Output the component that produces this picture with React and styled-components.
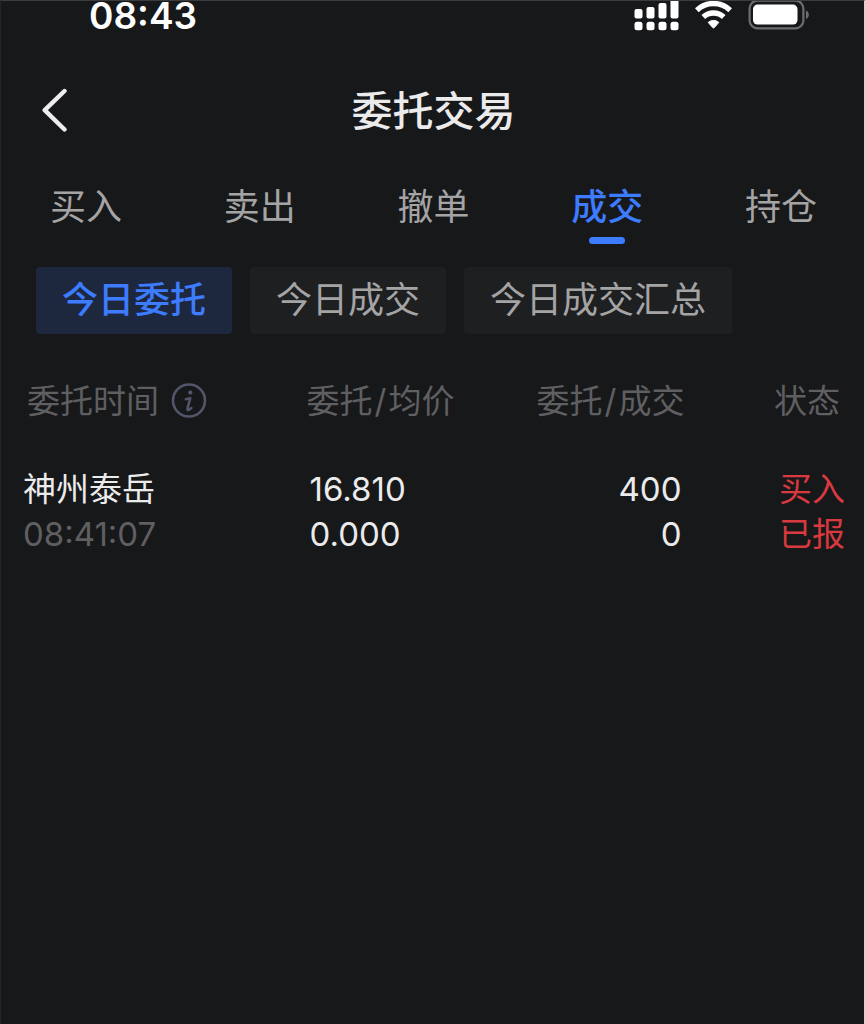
import { useState } from 'react'
import styled, { createGlobalStyle } from 'styled-components'

const GlobalStyle = createGlobalStyle`
    * {
        box-sizing: border-box;
    }

    body {
        margin: 0;
        background: #17181a;
        font-family: Inter, "Noto Sans CJK SC", sans-serif;
    }

    button {
        font-family: inherit;
        border: none;
        background: none;
        padding: 0;
        cursor: pointer;
    }
`

const Page = styled.div`
    min-height: 100vh;
    background: #17181a;
    color: #ebebec;
    border-top: 1px solid #3b3c3e;
    border-left: 1px solid #242527;
    border-right: 1px solid #d4d4d4;
`

// - - STATUS BAR - - //

const StatusBar = styled.div`
    display: flex;
    justify-content: space-between;
    height: 60px;
    padding: 0 54px 0 88px;
`

const Clock = styled.span`
    font-size: 37px;
    line-height: 29px;
    font-weight: 600;
    color: #ffffff;
`

const StatusIcons = styled.div`
    display: flex;
    gap: 16px;
    height: 30px;
`

// - - HEADER - - //

const Header = styled.header`
    display: grid;
    grid-template-columns: 1fr auto 1fr;
    align-items: center;
    height: 100px;
    padding: 0 33px 0 35px;
`

const BackButton = styled.button`
    display: flex;
    justify-self: start;
`

const Title = styled.h1`
    margin: 0;
    font-size: 41px;
    line-height: 60px;
    font-weight: 500;
`

// - - TABS - - //

const Tabs = styled.nav`
    display: flex;
    justify-content: space-between;
    height: 106px;
    padding: 16px 47px 0 49px;
`

const Tab = styled.button`
    display: flex;
    flex-direction: column;
    align-items: center;
    font-size: 36px;
    line-height: 60px;
    font-weight: ${props => props.$active ? 500 : 400};
    color: ${props => props.$active ? '#3d7bff' : '#a5a4a5'};

    &::after {
        content: '';
        width: 36px;
        height: 7px;
        border-radius: 4px;
        background: ${props => props.$active ? '#3d7bff' : 'transparent'};
    }
`

// - - FILTERS - - //

const Filters = styled.div`
    display: flex;
    gap: 18px;
    padding: 0 35px;
`

const Filter = styled.button`
    height: 67px;
    padding: 0 26px;
    border-radius: 4px;
    font-size: 36px;
    line-height: 67px;
    white-space: nowrap;
    font-weight: ${props => props.$active ? 500 : 400};
    color: ${props => props.$active ? '#3d7bff' : '#a5a4a5'};
    background: ${props => props.$active ? '#1d283f' : '#1e1f21'};
`

// - - ORDERS - - //

const Orders = styled.table`
    width: 100%;
    margin-top: 39px;
    border-collapse: collapse;
    table-layout: fixed;
    font-size: 33px;
`

const HeadCell = styled.th`
    width: ${props => props.$width};
    padding: 0 ${props => props.$last ? '24px' : '0'} 38px ${props => props.$first ? '26px' : '0'};
    text-align: ${props => props.$right ? 'right' : 'left'};
    font-weight: 400;
    line-height: 56px;
    white-space: nowrap;
    color: #5f5f61;
`

const HeadLabel = styled.span`
    display: flex;
    align-items: center;
    gap: 11px;
`

const Slash = styled.span`
    padding: 0 2px;
`

const InfoButton = styled.button`
    display: flex;
`

const Cell = styled.td`
    padding: 0 ${props => props.$last ? '19px' : '3px'} 0 ${props => props.$first ? '22px' : '3px'};
    text-align: ${props => props.$right ? 'right' : 'left'};
    white-space: nowrap;
    color: ${props => props.$red ? '#d9393f' : '#ebebec'};
`

const Line = styled.div`
    line-height: 45px;
    color: ${props => props.$dim ? '#5f5f61' : 'inherit'};
`

const SignalIcon = () => (
    <svg width="45" height="30" viewBox="0 0 45 30" fill="#fff" aria-hidden="true">
        <rect x="0.5" y="8" width="8" height="9.5" rx="2" />
        <rect x="12.5" y="6" width="8" height="11.5" rx="2" />
        <rect x="24.5" y="2" width="8" height="15.5" rx="2" />
        <rect x="36.5" y="-2" width="8" height="19.5" rx="2" />
        <rect x="0.5" y="20.8" width="8" height="8.5" rx="2.5" />
        <rect x="12.5" y="20.8" width="8" height="8.5" rx="2.5" />
        <rect x="24.5" y="20.8" width="8" height="8.5" rx="2.5" />
        <rect x="36.5" y="20.8" width="8" height="8.5" rx="2.5" />
    </svg>
)

const WifiIcon = () => (
    <svg width="37" height="30" viewBox="0 0 37 30" fill="none" stroke="#fff" strokeWidth="5.4" aria-hidden="true">
        <path d="M1.8 9.2C11.2 0.3 25.8 0.3 35.2 9.2" />
        <path d="M8.3 16C14 10.7 23 10.7 28.7 16" />
        <path d="M13.2 21.4C16.2 18.8 20.8 18.8 23.8 21.4L19.3 26.6Q18.5 27.5 17.7 26.6Z" fill="#fff" stroke="#fff" strokeWidth="1" />
    </svg>
)

const BatteryIcon = () => (
    <svg width="62" height="30" viewBox="0 0 62 30" aria-hidden="true">
        <rect x="1.6" y="-0.4" width="53.8" height="27.8" rx="8" fill="none" stroke="#6c6d6f" strokeWidth="2.2" />
        <rect x="5" y="3.6" width="44.5" height="20" rx="4.5" fill="#fff" />
        <path d="M58 9.5C61.8 10.8 61.8 16.7 58 18Z" fill="#6c6d6f" />
    </svg>
)

const BackIcon = () => (
    <svg width="36" height="46" viewBox="0 0 36 46" fill="none" stroke="#ededee" strokeWidth="4.4" strokeLinecap="round" strokeLinejoin="round" aria-hidden="true">
        <path d="M28.5 3L8.7 22.2L28.5 41.5" />
    </svg>
)

const InfoIcon = () => (
    <svg width="38" height="38" viewBox="0 0 38 38" fill="none" stroke="#51566b" strokeLinecap="round" strokeLinejoin="round" aria-hidden="true">
        <circle cx="19" cy="18.5" r="16" strokeWidth="2.6" />
        <circle cx="20.3" cy="10.6" r="2.1" fill="#51566b" stroke="none" />
        <path d="M15.8 17.2L20.3 16.2L17.4 26.6Q17.2 28.6 19 27.8L21.4 26" strokeWidth="2.5" />
    </svg>
)

const tabs = ['买入', '卖出', '撤单', '成交', '持仓']
const filters = ['今日委托', '今日成交', '今日成交汇总']

const orders = [
    {
        name: '神州泰岳',
        time: '08:41:07',
        price: '16.810',
        average: '0.000',
        amount: '400',
        filled: '0',
        side: '买入',
        status: '已报'
    }
]

export default function App() {
    const [tab, setTab] = useState('成交')
    const [filter, setFilter] = useState('今日委托')

    return (
        <Page>
            <GlobalStyle />
            <StatusBar>
                <Clock>08:43</Clock>
                <StatusIcons>
                    <SignalIcon />
                    <WifiIcon />
                    <BatteryIcon />
                </StatusIcons>
            </StatusBar>
            <Header>
                <BackButton aria-label="返回"><BackIcon /></BackButton>
                <Title>委托交易</Title>
            </Header>
            <Tabs>
                {tabs.map(name => (
                    <Tab key={name} $active={name === tab} onClick={() => setTab(name)}>{name}</Tab>
                ))}
            </Tabs>
            <Filters>
                {filters.map(name => (
                    <Filter key={name} $active={name === filter} onClick={() => setFilter(name)}>{name}</Filter>
                ))}
            </Filters>
            <Orders>
                <thead>
                    <tr>
                        <HeadCell $first $width="35.4%">
                            <HeadLabel>
                                委托时间
                                <InfoButton aria-label="说明"><InfoIcon /></InfoButton>
                            </HeadLabel>
                        </HeadCell>
                        <HeadCell $width="22%">委托<Slash>/</Slash>均价</HeadCell>
                        <HeadCell $width="21.8%" $right>委托<Slash>/</Slash>成交</HeadCell>
                        <HeadCell $right $last>状态</HeadCell>
                    </tr>
                </thead>
                <tbody>
                    {orders.map(order => (
                        <tr key={order.time}>
                            <Cell $first>
                                <Line>{order.name}</Line>
                                <Line $dim>{order.time}</Line>
                            </Cell>
                            <Cell>
                                <Line>{order.price}</Line>
                                <Line>{order.average}</Line>
                            </Cell>
                            <Cell $right>
                                <Line>{order.amount}</Line>
                                <Line>{order.filled}</Line>
                            </Cell>
                            <Cell $right $last $red>
                                <Line>{order.side}</Line>
                                <Line>{order.status}</Line>
                            </Cell>
                        </tr>
                    ))}
                </tbody>
            </Orders>
        </Page>
    )
}
